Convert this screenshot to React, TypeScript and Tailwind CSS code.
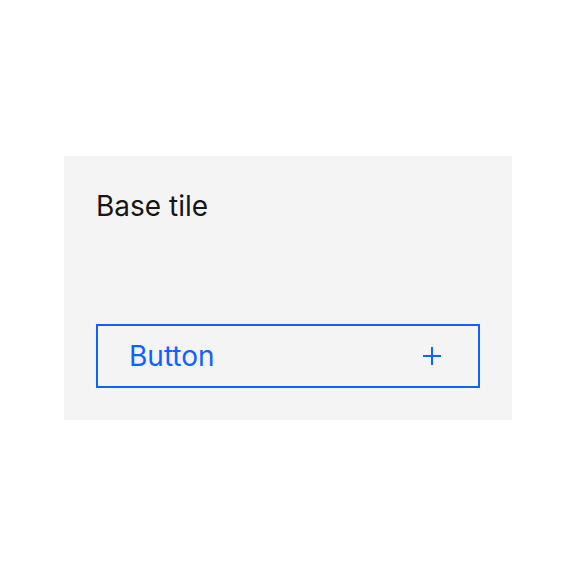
export default function App() {
  return (
    <div className="flex h-[576px] w-[576px] items-center justify-center bg-white" style={{ fontFamily: 'Inter, "Noto Sans", sans-serif' }}>
      <div className="flex h-[264px] w-[448px] flex-col justify-between bg-[#f4f4f4] p-8">
        <h2 className="text-[28px] leading-[36px] text-[#161616]">Base tile</h2>
        <button className="flex h-16 w-full items-center justify-between border-2 border-[#0f62fe] pl-[31px] pr-[37px] text-[28px] text-[#0f62fe]">
          <span>Button</span>
          <svg width="18" height="18" viewBox="0 0 18 18" fill="none" stroke="currentColor" strokeWidth="2">
            <path d="M9 0v18M0 9h18" />
          </svg>
        </button>
      </div>
    </div>
  );
}
